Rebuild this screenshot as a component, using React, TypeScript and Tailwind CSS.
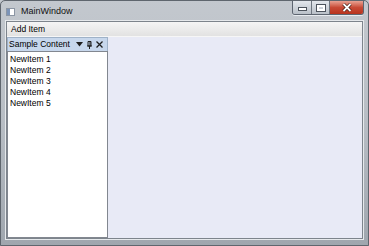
import React from 'react';

const items = ['NewItem 1', 'NewItem 2', 'NewItem 3', 'NewItem 4', 'NewItem 5'];

const WindowButtons: React.FC = () => (
  <div className="flex h-[14px] self-start overflow-hidden rounded-b-[3px] border border-t-0 border-[#5d6570] shadow-[0_1px_0_#e8ecf0]">
    <div className="flex w-[19px] items-center justify-center border-r border-[#6e7680] bg-gradient-to-b from-[#e3e7ec] to-[#b9c0c8]">
      <div className="mt-[3px] h-[2px] w-[7px] bg-white shadow-[0_0_0_1px_#4c535c]" />
    </div>
    <div className="flex w-[18px] items-center justify-center border-r border-[#6e7680] bg-gradient-to-b from-[#e3e7ec] to-[#b9c0c8]">
      <div className="h-[6px] w-[8px] border-2 border-white shadow-[0_0_0_1px_#4c535c]" />
    </div>
    <div className="flex w-[33px] items-center justify-center bg-gradient-to-b from-[#e8a193] via-[#c84a36] to-[#b8331d]">
      <svg width="10" height="9" viewBox="0 0 10 9">
        <path d="M1.5 1 L8.5 8 M8.5 1 L1.5 8" stroke="#3b1710" strokeWidth="3.2" />
        <path d="M1.5 1 L8.5 8 M8.5 1 L1.5 8" stroke="#ffffff" strokeWidth="1.8" />
      </svg>
    </div>
  </div>
);

const App: React.FC = () => {
  return (
    <div
      className="flex h-[246px] w-[369px] flex-col bg-gradient-to-b from-[#c3c8ce] via-[#b7bdc4] to-[#9fa6ae] text-[8.5px] text-black"
      style={{ fontFamily: '"Liberation Sans", Arial, sans-serif' }}
    >
      <div className="flex h-full flex-col rounded-t-[5px] border border-[#5f666e]">
        {/* title bar */}
        <div className="flex h-[20px] items-start justify-between pl-[5px] pr-[4px]">
          <div className="flex items-center gap-[6px] pt-[6px]">
            <div className="flex h-[8px] w-[9px] border border-[#8c96a4] bg-white">
              <div className="h-full w-[3px] bg-[#7c94b8]" />
            </div>
            <span className="text-[9px] leading-none text-[#111]">MainWindow</span>
          </div>
          <WindowButtons />
        </div>

        {/* client area */}
        <div className="mx-[5px] mb-[6px] flex flex-1 flex-col border border-[#7d848c] shadow-[0_0_0_1px_#e6e9ec]">
          <div className="flex h-[15px] items-center border-b border-[#f6f6f6] bg-gradient-to-b from-[#f5f5f5] to-[#e2e2e2] pl-[4px]">
            <span className="leading-none">Add Item</span>
          </div>
          <div className="flex flex-1 bg-[#e8eaf6]">
            <div className="flex w-[101px] flex-col">
              <div className="flex h-[14px] items-center justify-between border border-b-0 border-[#9fb2c8] bg-[#c7d7ec] pl-[1px] pr-[4px]">
                <span className="leading-none">Sample Content</span>
                <div className="flex items-center gap-[4px]">
                  <svg width="7" height="5" viewBox="0 0 7 5">
                    <path d="M0 0 H7 L3.5 4.5 Z" fill="#1e1e1e" />
                  </svg>
                  <svg width="5" height="8" viewBox="0 0 5 8">
                    <path d="M1 0.5 H4 V5 H1 Z M0 5 H5 M2.5 5 V8" stroke="#1e1e1e" strokeWidth="1" fill="none" />
                    <path d="M3 1 V5" stroke="#1e1e1e" strokeWidth="1" />
                  </svg>
                  <svg width="7" height="7" viewBox="0 0 7 7">
                    <path d="M0.5 0.5 L6.5 6.5 M6.5 0.5 L0.5 6.5" stroke="#1e1e1e" strokeWidth="1.3" />
                  </svg>
                </div>
              </div>
              <div className="flex flex-1 flex-col border border-[#828790] bg-white pl-[2px] pt-[2px]">
                {items.map((item) => (
                  <div key={item} className="h-[11px] leading-[11px]">
                    {item}
                  </div>
                ))}
              </div>
            </div>
            <div className="flex-1" />
          </div>
        </div>
      </div>
    </div>
  );
};

export default App;
